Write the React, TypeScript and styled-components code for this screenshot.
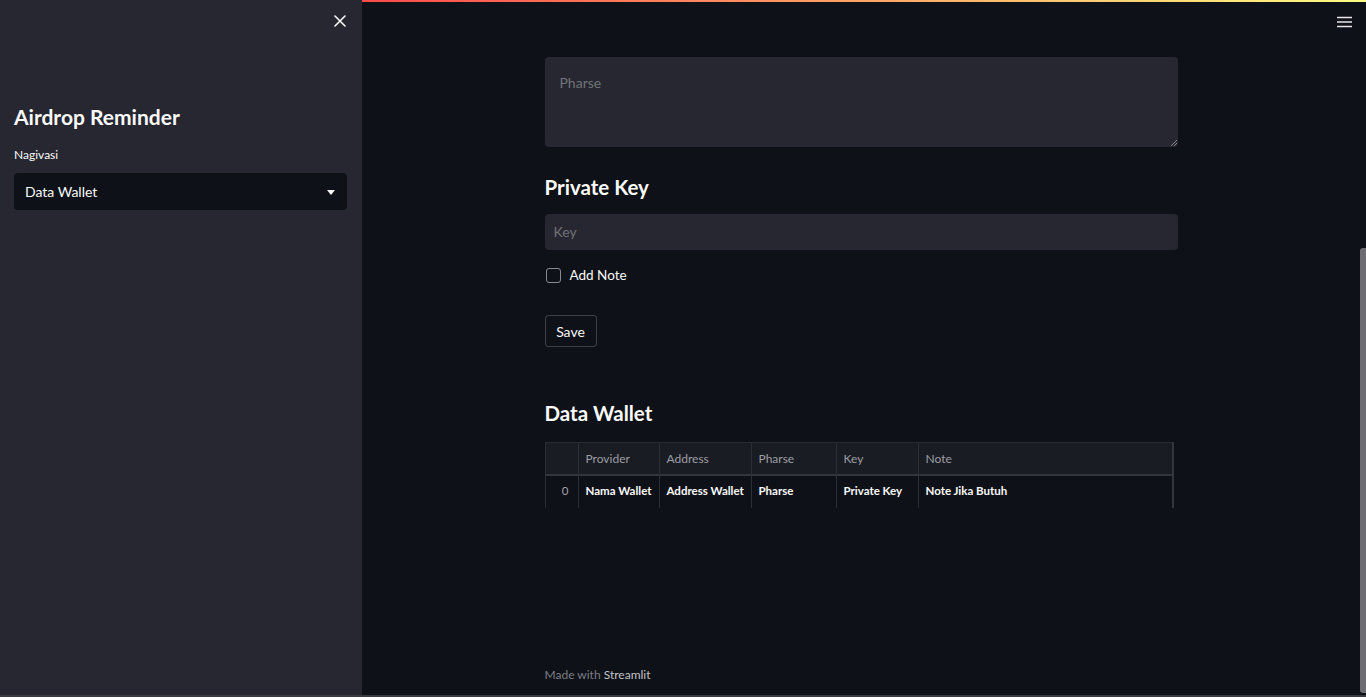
import React from 'react';
import styled, { createGlobalStyle } from 'styled-components';

const GlobalStyle = createGlobalStyle`
  html, body {
    margin: 0;
    padding: 0;
    background: #0e1117;
    overflow: hidden;
  }
  * {
    box-sizing: border-box;
  }
  body {
    font-family: Lato, "Noto Sans", sans-serif;
    color: #fafafa;
  }
`;

const columns = ['Provider', 'Address', 'Pharse', 'Key', 'Note'];
const rows = [['Nama Wallet', 'Address Wallet', 'Pharse', 'Private Key', 'Note Jika Butuh']];

const App: React.FC = () => {
  return (
    <Shell>
      <GlobalStyle />
      <Sidebar>
        <SidebarTop>
          <IconButton aria-label="close">
            <svg width="12" height="12" viewBox="0 0 12 12">
              <path d="M1 1 L11 11 M11 1 L1 11" stroke="#fafafa" strokeWidth="1.6" strokeLinecap="round" />
            </svg>
          </IconButton>
        </SidebarTop>
        <SidebarTitle>Airdrop Reminder</SidebarTitle>
        <FieldLabel>Nagivasi</FieldLabel>
        <SelectBox>
          <span>Data Wallet</span>
          <Caret />
        </SelectBox>
      </Sidebar>

      <Main>
        <Decoration />
        <MainBody>
          <Content>
            <Toolbar>
              <IconButton aria-label="menu">
                <svg width="15" height="12" viewBox="0 0 15 12">
                  <path d="M0 1.5 H15 M0 6 H15 M0 10.5 H15" stroke="#e6e6e6" strokeWidth="1.6" />
                </svg>
              </IconButton>
            </Toolbar>
            <Block>
              <TextArea>
                <Placeholder>Pharse</Placeholder>
                <Grip>
                  <svg width="7" height="7" viewBox="0 0 7 7">
                    <path d="M1 7 L7 1 M4 7 L7 4" stroke="#9a9ba0" strokeWidth="0.8" />
                  </svg>
                </Grip>
              </TextArea>

              <Heading $top={25}>Private Key</Heading>
              <Input>
                <Placeholder>Key</Placeholder>
              </Input>

              <CheckRow>
                <CheckBox />
                <span>Add Note</span>
              </CheckRow>

              <SaveButton>Save</SaveButton>

              <Heading $top={51}>Data Wallet</Heading>
              <Table>
                <HeadCell />
                {columns.map((c) => (
                  <HeadCell key={c}>{c}</HeadCell>
                ))}
                {rows.map((r, i) => (
                  <React.Fragment key={i}>
                    <IndexCell>{i}</IndexCell>
                    {r.map((v, j) => (
                      <Cell key={j}>{v}</Cell>
                    ))}
                  </React.Fragment>
                ))}
              </Table>
            </Block>
            <Footer>
              Made with <b>Streamlit</b>
            </Footer>
          </Content>
          <ScrollTrack>
            <ScrollThumb />
          </ScrollTrack>
        </MainBody>
      </Main>
    </Shell>
  );
};

const Shell = styled.div`
  display: flex;
  height: 697px;
  border-bottom: 2px solid #3a3b40;
`;

const Sidebar = styled.aside`
  width: 362px;
  flex-shrink: 0;
  background: #262730;
  display: flex;
  flex-direction: column;
  padding: 0 15px 0 14px;
`;

const SidebarTop = styled.div`
  height: 42px;
  display: flex;
  align-items: center;
  justify-content: flex-end;
  margin-right: -3px;
`;

const IconButton = styled.div`
  display: flex;
  align-items: center;
  justify-content: center;
  width: 20px;
  height: 20px;
`;

const SidebarTitle = styled.h2`
  margin: 60px 0 0;
  font-size: 21px;
  line-height: 30px;
  font-weight: 700;
`;

const FieldLabel = styled.div`
  margin-top: 15px;
  font-size: 12px;
  line-height: 16px;
`;

const SelectBox = styled.div`
  margin-top: 10px;
  height: 37px;
  background: #0e1117;
  border-radius: 4px;
  display: flex;
  align-items: center;
  justify-content: space-between;
  padding: 0 12px 0 11px;
  font-size: 14px;
`;

const Caret = styled.span`
  width: 0;
  height: 0;
  border-left: 4.5px solid transparent;
  border-right: 4.5px solid transparent;
  border-top: 5px solid #fafafa;
  margin-top: 2px;
`;

const Main = styled.main`
  flex: 1;
  display: flex;
  flex-direction: column;
  background: #0e1117;
  min-width: 0;
`;

const Decoration = styled.div`
  height: 2px;
  flex-shrink: 0;
  background: linear-gradient(90deg, rgb(255, 75, 75), rgb(255, 253, 128));
`;

const MainBody = styled.div`
  flex: 1;
  display: flex;
  min-height: 0;
`;

const Content = styled.div`
  flex: 1;
  display: flex;
  flex-direction: column;
`;

const Toolbar = styled.div`
  height: 40px;
  display: flex;
  align-items: center;
  justify-content: flex-end;
  padding-right: 6px;
`;

const Block = styled.div`
  width: 633px;
  margin: 15px auto 0;
  display: flex;
  flex-direction: column;
  align-items: stretch;
`;

const TextArea = styled.div`
  height: 90px;
  background: #262730;
  border-radius: 4px;
  padding: 17px 15px;
  position: relative;
  font-size: 14px;
`;

const Grip = styled.div`
  position: absolute;
  right: 1px;
  bottom: 1px;
  display: flex;
`;

const Placeholder = styled.span`
  color: #727379;
  font-size: 14px;
  line-height: 18px;
`;

const Heading = styled.h3<{ $top: number }>`
  margin: ${(p) => p.$top}px 0 0;
  font-size: 20.5px;
  line-height: 30px;
  font-weight: 700;
`;

const Input = styled.div`
  margin-top: 12px;
  height: 36px;
  background: #262730;
  border-radius: 4px;
  display: flex;
  align-items: center;
  padding: 0 9px;
`;

const CheckRow = styled.label`
  margin-top: 15px;
  height: 20px;
  display: flex;
  align-items: center;
  gap: 9px;
  font-size: 13.5px;
`;

const CheckBox = styled.span`
  width: 15px;
  height: 15px;
  margin-left: 1px;
  border: 1px solid #8a8b90;
  border-radius: 3px;
`;

const SaveButton = styled.button`
  margin-top: 30px;
  align-self: flex-start;
  width: 52px;
  height: 32px;
  background: #0e1117;
  border: 1px solid rgba(250, 250, 250, 0.2);
  border-radius: 4px;
  color: #fafafa;
  font-family: inherit;
  font-size: 14px;
  padding: 0;
`;

const Table = styled.div`
  margin-top: 14px;
  width: 629px;
  display: grid;
  grid-template-columns: 33px 81px 92px 85px 82px 1fr;
  grid-template-rows: 33px 32px;
  border-top: 1px solid #2a2c33;
  border-left: 1px solid #2a2c33;
  border-right: 2px solid #34363c;
  font-size: 12px;
`;

const HeadCell = styled.div`
  background: #1a1c23;
  color: #9c9ea4;
  border-right: 1px solid #2d2f36;
  border-bottom: 2px solid #33353b;
  display: flex;
  align-items: center;
  padding: 0 7px;
  &:nth-child(6) {
    border-right: none;
  }
`;

const Cell = styled.div`
  color: #fafafa;
  font-weight: 700;
  font-size: 11.5px;
  border-right: 1px solid #2d2f36;
  display: flex;
  align-items: center;
  padding: 0 7px 4px;
  white-space: nowrap;
  &:last-child {
    border-right: none;
  }
`;

const IndexCell = styled(Cell)`
  color: #a0a2a8;
  font-weight: 400;
  justify-content: flex-end;
  padding-right: 9px;
`;

const Footer = styled.div`
  margin: auto auto 0;
  width: 633px;
  padding-bottom: 12px;
  font-size: 12px;
  line-height: 16px;
  color: #7c7e85;
  b {
    font-weight: 400;
    color: #c3c4c8;
  }
`;

const ScrollTrack = styled.div`
  width: 6px;
  flex-shrink: 0;
  display: flex;
  flex-direction: column;
  padding-top: 246px;
  padding-bottom: 2px;
`;

const ScrollThumb = styled.div`
  flex: 1;
  background: #6c6c72;
  border-radius: 3px 0 0 3px;
`;

export default App;
